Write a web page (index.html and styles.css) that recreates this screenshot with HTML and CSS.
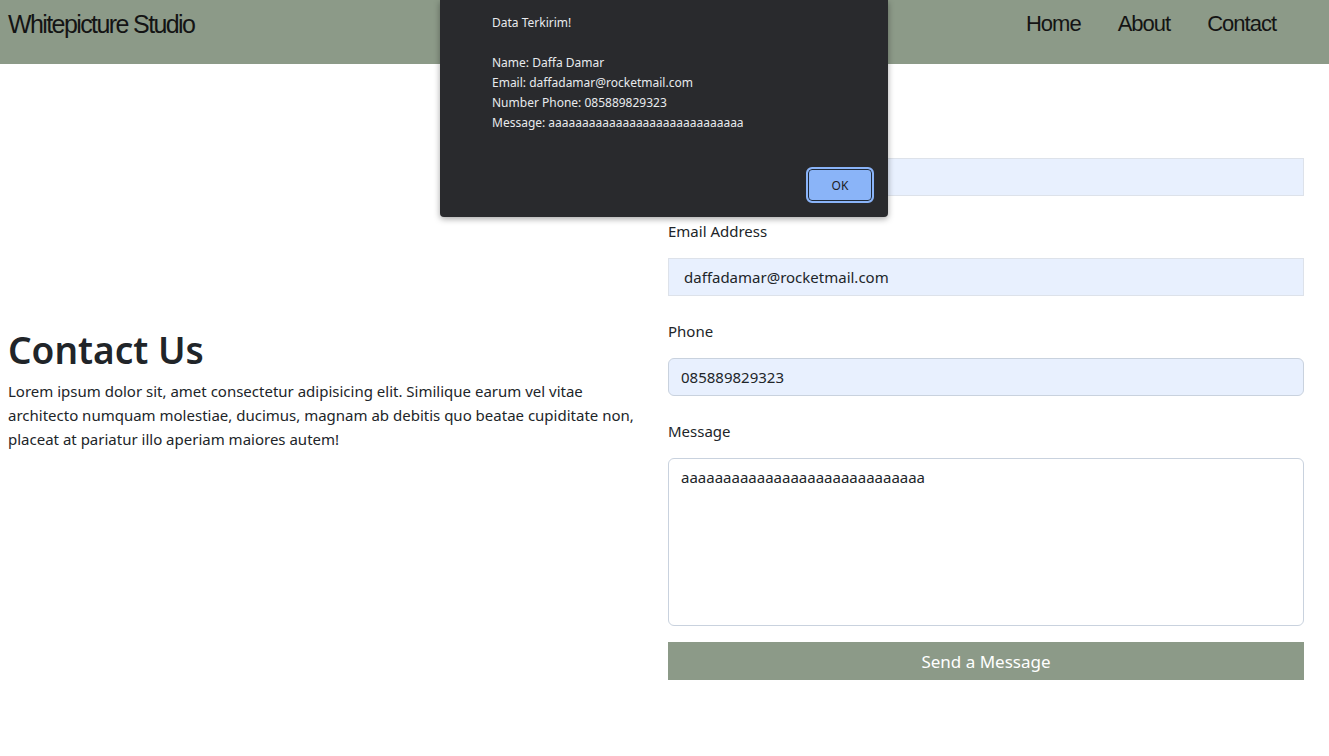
FILE: index.html
```html
<!DOCTYPE html>
<html lang="id">
<head>
<meta charset="utf-8">
<title>Whitepicture Studio - Contact</title>
<link rel="stylesheet" href="styles.css">
</head>
<body>
<header class="topbar">
  <a class="brand" href="#">Whitepicture Studio</a>
  <nav class="nav">
    <a href="#">Home</a>
    <a href="#">About</a>
    <a href="#">Contact</a>
  </nav>
</header>

<main class="contact">
  <section class="intro">
    <h1>Contact Us</h1>
    <p>Lorem ipsum dolor sit, amet consectetur adipisicing elit. Similique earum vel vitae architecto numquam molestiae, ducimus, magnam ab debitis quo beatae cupiditate non, placeat at pariatur illo aperiam maiores autem!</p>
  </section>
  <form class="form">
    <div class="group">
      <label for="name">Name</label>
      <input id="name" class="field square autofill" type="text" value="Daffa Damar">
    </div>
    <div class="group">
      <label for="email">Email Address</label>
      <input id="email" class="field square autofill" type="email" value="daffadamar@rocketmail.com">
    </div>
    <div class="group">
      <label for="phone">Phone</label>
      <input id="phone" class="field rounded autofill" type="text" value="085889829323">
    </div>
    <div class="group">
      <label for="msg">Message</label>
      <textarea id="msg" class="field rounded area">aaaaaaaaaaaaaaaaaaaaaaaaaaaaa</textarea>
    </div>
    <button type="button" class="send">Send a Message</button>
  </form>
</main>

<div class="dialog" role="alertdialog">
  <div class="dialog-body">
    <p>Data Terkirim!</p>
    <p class="gap">Name: Daffa Damar</p>
    <p>Email: daffadamar@rocketmail.com</p>
    <p>Number Phone: 085889829323</p>
    <p>Message: aaaaaaaaaaaaaaaaaaaaaaaaaaaaa</p>
  </div>
  <div class="dialog-actions">
    <button type="button" class="ok">OK</button>
  </div>
</div>
</body>
</html>
```

FILE: styles.css
```css
* { box-sizing: border-box; }

html, body {
  margin: 0;
  padding: 0;
  background: #fff;
  color: #212529;
  font-family: "Noto Sans", "Open Sans", sans-serif;
  font-size: 16px;
  line-height: 1.5;
}

.topbar {
  height: 64px;
  background: #8c9a88;
  display: flex;
  justify-content: space-between;
  align-items: flex-start;
  padding: 6px 53px 0 8px;
}

.brand {
  font-family: "Liberation Sans", sans-serif;
  font-size: 25px;
  letter-spacing: -1.6px;
  line-height: 36px;
  color: #141414;
  text-decoration: none;
}

.nav {
  display: flex;
  gap: 37px;
}

.nav a {
  font-family: "Liberation Sans", sans-serif;
  font-size: 22px;
  letter-spacing: -1px;
  line-height: 36px;
  color: #141414;
  text-decoration: none;
}

.contact {
  display: flex;
  align-items: center;
  gap: 24px;
  padding: 56px 0 0 8px;
  width: 1304px;
}

.intro {
  flex: 1 1 0;
  min-width: 0;
}

.intro h1 {
  margin: 0 0 6px;
  font-size: 37px;
  line-height: 46px;
  font-weight: 600;
}

.intro p {
  margin: 0 0 22px;
  font-size: 15px;
  line-height: 24px;
}

.form {
  flex: 1 1 0;
  min-width: 0;
  display: flex;
  flex-direction: column;
}

.group {
  display: flex;
  flex-direction: column;
  margin-bottom: 24px;
}

.group:last-of-type { margin-bottom: 16px; }

.group label {
  font-size: 15px;
  line-height: 22px;
  margin-bottom: 16px;
}

.field {
  width: 100%;
  height: 38px;
  font-family: inherit;
  font-size: 15px;
  color: #212529;
  border: 1px solid #dde2ea;
}

.square {
  border-radius: 0;
  padding: 0 15px;
}

.rounded {
  border-radius: 6px;
  padding: 0 12px;
  border-color: #c9d2de;
}

.autofill { background: #e8f0fe; }

.area {
  height: 168px;
  padding: 6px 12px;
  background: #fff;
  resize: none;
  line-height: 24px;
}

.send {
  height: 38px;
  border: 0;
  background: #8c9a88;
  color: #fff;
  font-family: inherit;
  font-size: 17px;
}

.dialog {
  position: absolute;
  top: 0;
  left: 440px;
  width: 448px;
  height: 217px;
  background: #292a2d;
  border-radius: 0 0 4px 4px;
  box-shadow: 0 2px 6px rgba(0, 0, 0, 0.35);
  color: #e8eaed;
  font-family: "Noto Sans", "Open Sans", sans-serif;
  font-size: 12px;
  display: flex;
  flex-direction: column;
  justify-content: space-between;
}

.dialog-body {
  padding: 13px 52px 0;
}

.dialog-body p {
  margin: 0;
  line-height: 20px;
}

.dialog-body .gap { margin-top: 20px; }

.dialog-actions {
  display: flex;
  justify-content: flex-end;
  padding: 0 16px 16px;
}

.ok {
  width: 64px;
  height: 32px;
  background: #8ab4f8;
  color: #202124;
  border: 1px solid #1f2a3a;
  border-radius: 4px;
  outline: 2px solid #8ab4f8;
  outline-offset: 0;
  box-shadow: 0 0 0 1px #8ab4f8;
  font-family: inherit;
  font-size: 12px;
}
```
